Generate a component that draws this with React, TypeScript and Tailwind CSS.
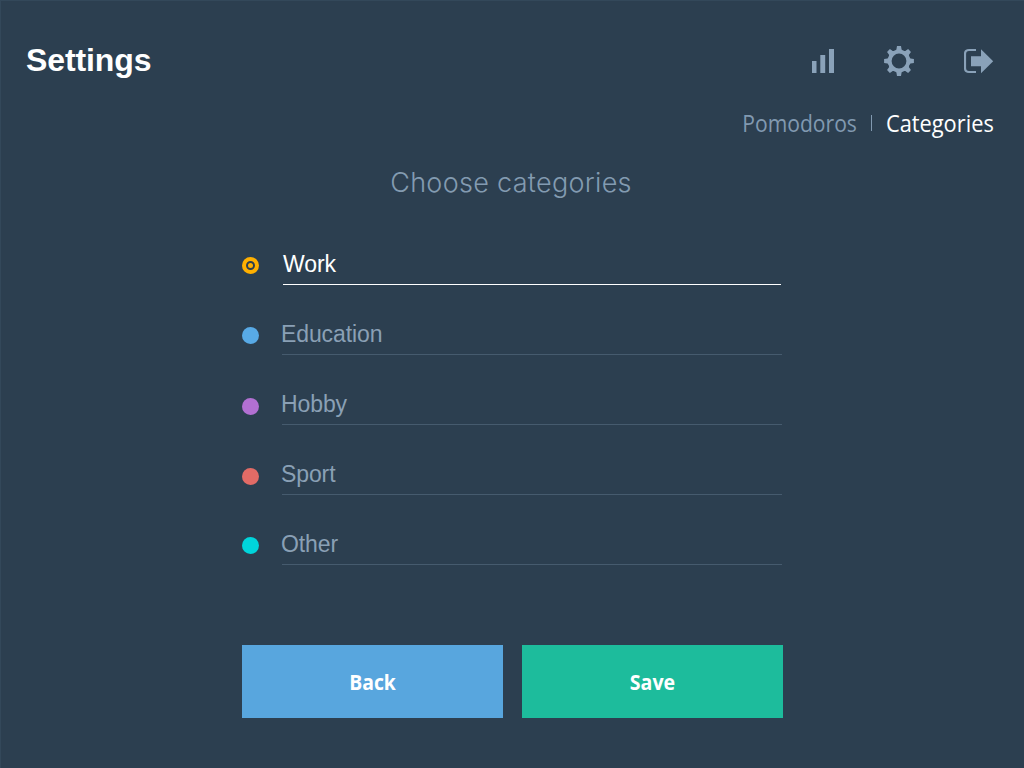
import React from "react";

const categories = [
  { name: "Education", dot: "bg-[#58aae6]", top: "mt-[12px]", text: "-ml-px" },
  { name: "Hobby", dot: "bg-[#b270d2]", top: "mt-[13px]", text: "-ml-px" },
  { name: "Sport", dot: "bg-[#e26b66]", top: "mt-[13px]", text: "-ml-px" },
  { name: "Other", dot: "bg-[#00d5db]", top: "mt-[12px]", text: "-ml-px" },
];

function StatsIcon() {
  return (
    <svg width="24" height="26" viewBox="811 48 24 26" fill="#8aa2b9">
      <path d="M812 61h4.5v12H812zM820.3 55h4.9v18h-4.9zM829 49h5v24h-5z" />
    </svg>
  );
}

function GearIcon() {
  const angles = [0, 45, 90, 135, 180, 225, 270, 315];
  return (
    <svg width="30" height="30" viewBox="-15 -15 30 30" fill="#8aa2b9">
      <circle r="9.3" fill="none" stroke="#8aa2b9" strokeWidth="3.8" />
      {angles.map((a) => (
        <path key={a} transform={`rotate(${a})`} d="M-4.400-9.500L-2.600-11.500L-2-14.900H2L2.600-11.500L4.400-9.500z" />
      ))}
    </svg>
  );
}

function LogoutIcon() {
  return (
    <svg width="30" height="26" viewBox="964 48 30 26" fill="#8aa2b9">
      <path d="M976 50h-7Q965 50 965 54v14Q965 72 969 72h7" fill="none" stroke="#8aa2b9" strokeWidth="2.200" />
      <path d="M971 56.300h10V49.200L993.200 61.200L981 73.200V66.300H971z" />
    </svg>
  );
}

export default function App() {
  return (
    <main className="flex h-[768px] w-[1024px] flex-col overflow-hidden bg-[#2c3f50] font-['Liberation_Sans',sans-serif] shadow-[inset_1px_1px_0_#33485a]">
      <header className="flex h-[96px] items-start justify-between pl-[26px] pr-[30px]">
        <h1 className="mt-[40px] text-[32px] leading-[40px] font-bold tracking-[-0.1px] text-white">Settings</h1>
        <div className="mt-[46px] flex h-[30px] items-center">
          <StatsIcon />
          <div className="ml-[49px] h-[30px]"><GearIcon /></div>
          <div className="ml-[50px]"><LogoutIcon /></div>
        </div>
      </header>
      <nav className="flex h-[54px] items-center justify-end pr-[30px] font-['Open_Sans',sans-serif] text-[23px] leading-[54px]">
        <span className="origin-right scale-x-[0.918] text-[#8199b0]">Pomodoros</span>
        <span className="ml-[14px] mr-[8px] h-[16px] w-px bg-[#8199b0]" />
        <span className="origin-right scale-x-[0.948] text-white">Categories</span>
      </nav>
      <h2 className="mt-[13px] h-[40px] pr-[2px] text-center font-['Inter',sans-serif] text-[27px] leading-[40px] font-light tracking-[0.3px] text-[#839bb1]">
        <span>Choose categories</span>
      </h2>
      <section className="ml-[242px] mt-[42px] w-[541px] text-[23px] leading-[38px] tracking-[-0.1px]">
        <div className="flex h-[70px] items-start">
          <span className="mt-[12px] flex h-[17px] w-[17px] items-center justify-center rounded-full bg-[#ffb000]">
            <span className="h-[9px] w-[9px] rounded-full border-2 border-[#2c3f50] bg-[#ffb000]" />
          </span>
          <span className="ml-[24px] h-[40px] w-[498px] border-b border-white text-white">Work</span>
        </div>
        {categories.map((c) => (
          <div key={c.name} className="flex h-[70px] items-start">
            <span className={`h-[17px] w-[17px] rounded-full ${c.top} ${c.dot}`} />
            <span className="ml-[23px] h-[40px] w-[500px] border-b border-[#465b6e] text-[#8aa0b5]">
              <span className={c.text}>{c.name}</span>
            </span>
          </div>
        ))}
      </section>
      <div className="ml-[242px] mt-[50px] flex gap-[19px] font-['Open_Sans',sans-serif] text-[22px] font-bold text-white">
        <button className="h-[73px] w-[261px] bg-[#58a6de]"><span className="inline-block scale-x-[0.88]">Back</span></button>
        <button className="h-[73px] w-[261px] bg-[#1dbc9c]"><span className="inline-block scale-x-[0.89]">Save</span></button>
      </div>
    </main>
  );
}
